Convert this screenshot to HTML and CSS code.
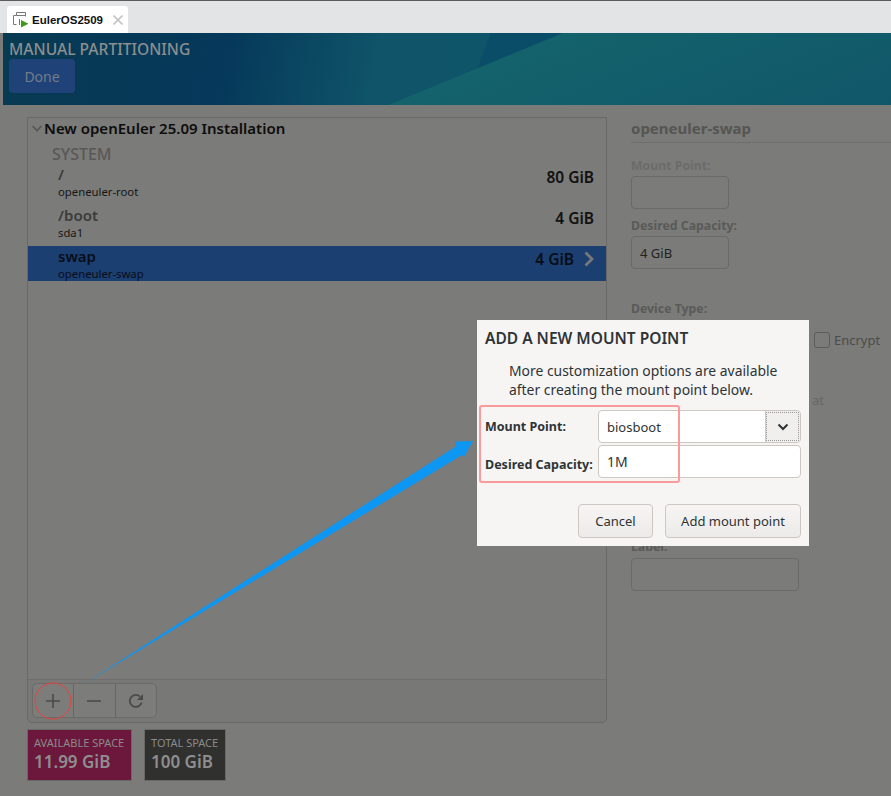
FILE: index.html
```html
<!DOCTYPE html>
<html lang="en">
<head>
  <meta charset="UTF-8">
  <title>Manual Partitioning</title>
  <link rel="stylesheet" href="styles.css">
</head>
<body>
  <div class="tabbar">
    <div class="tab">
      <svg class="vm-icon" width="16" height="16" viewBox="0 0 16 16">
        <path d="M3.5 12.5H.5V3.5h3M3.5 3.5V.5h9v4M3.5 3.5h9M6.5 7v6" fill="none" stroke="#777" stroke-width="1"/>
        <path d="M8 8l7.5 3.8L8 15.5z" fill="#3f9a1c"/>
      </svg>
      <span class="tab-name">EulerOS2509</span>
      <svg class="tab-close" width="10" height="10" viewBox="0 0 10 10"><path d="M.5.5l9 9M9.5.5l-9 9" stroke="#c4c4c4" stroke-width="1.6"/></svg>
    </div>
  </div>

  <div class="window">
    <header class="banner">
      <h1>MANUAL PARTITIONING</h1>
      <button class="done">Done</button>
    </header>

    <div class="content">
      <div class="left">
        <div class="panel">
          <div class="panel-head">
            <svg width="12" height="12" viewBox="0 0 12 12"><path d="M1.5 4l4.5 4.5L10.5 4" fill="none" stroke="#555" stroke-width="1.6"/></svg>
            <span>New openEuler 25.09 Installation</span>
          </div>
          <div class="section">SYSTEM</div>
          <div class="row row-first">
            <div><div class="mount">/</div><div class="dev">openeuler-root</div></div>
            <div class="size">80 GiB</div>
          </div>
          <div class="row">
            <div><div class="mount">/boot</div><div class="dev">sda1</div></div>
            <div class="size">4 GiB</div>
          </div>
          <div class="row selected">
            <div><div class="mount">swap</div><div class="dev">openeuler-swap</div></div>
            <div class="size">4 GiB
              <svg width="12" height="16" viewBox="0 0 12 16"><path d="M2.5 1.5L9 8l-6.5 6.5" fill="none" stroke="#777" stroke-width="2.8"/></svg>
            </div>
          </div>
          <div class="spacer"></div>
          <div class="toolbar">
            <div class="tool-group">
              <div class="tool"><svg width="16" height="16" viewBox="0 0 16 16"><path d="M8 1v14M1 8h14" stroke="#4a4a48" stroke-width="1.6"/></svg></div>
              <div class="tool"><svg width="16" height="16" viewBox="0 0 16 16"><path d="M1 8h14" stroke="#4a4a48" stroke-width="1.6"/></svg></div>
              <div class="tool"><svg width="16" height="16" viewBox="0 0 16 16"><path d="M13.6 9.5A6 6 0 1 1 12 3.6" fill="none" stroke="#4a4a48" stroke-width="1.8"/><path d="M15 1v6H9z" fill="#4a4a48"/></svg></div>
            </div>
          </div>
        </div>
        <div class="spaces">
          <div class="space space-free"><div class="space-label">AVAILABLE SPACE</div><div class="space-value">11.99 GiB</div></div>
          <div class="space space-total"><div class="space-label">TOTAL SPACE</div><div class="space-value">100 GiB</div></div>
        </div>
      </div>

      <div class="right">
        <div class="detail-title">openeuler-swap</div>
        <div class="field-label label-off">Mount Point:</div>
        <div class="field"></div>
        <div class="field-label label-cap">Desired Capacity:</div>
        <div class="field">4 GiB</div>
        <div class="field-label label-type">Device Type:</div>
        <div class="encrypt"><span class="check"></span>Encrypt</div>
        <div class="format-tail">at</div>
        <div class="field-label label-name">Label:</div>
        <div class="field field-wide"></div>
      </div>
    </div>
  </div>

  <div class="dialog">
    <h2>ADD A NEW MOUNT POINT</h2>
    <p>More customization options are available<br>after creating the mount point below.</p>
    <div class="form">
      <label>Mount Point:</label>
      <div class="combo"><span>biosboot</span><div class="combo-btn"><svg width="12" height="8" viewBox="0 0 12 8"><path d="M1.5 1.5L6 6l4.5-4.5" fill="none" stroke="#2e3436" stroke-width="2"/></svg></div></div>
      <label class="label-low">Desired Capacity:</label>
      <div class="entry">1M</div>
    </div>
    <div class="actions">
      <button class="btn btn-cancel">Cancel</button>
      <button class="btn btn-add">Add mount point</button>
    </div>
  </div>

  <svg class="notes" width="891" height="796" viewBox="0 0 891 796">
    <polygon points="84,684 456.5,446 455,441.5 473,441 464,457 462,455" fill="#0d96f2"/>
    <ellipse cx="53" cy="701" rx="18" ry="18" fill="none" stroke="#e8403c" stroke-width="1"/>
    <rect x="480" y="406" width="199" height="76" rx="2" fill="none" stroke="#fb9a9a" stroke-width="2"/>
  </svg>
</body>
</html>
```

FILE: styles.css
```css
* { box-sizing: border-box; }
body {
  margin: 0;
  height: 796px;
  overflow: hidden;
  font-family: "Noto Sans", "Open Sans", sans-serif;
  font-size: 13px;
  background: #7b7b79;
  color: #111;
  position: relative;
}

.tabbar {
  height: 33px;
  background: #e3e4e6;
  border-top: 1px solid #5c5c5c;
  padding: 5px 0 0 7px;
}
.tab {
  width: 121px;
  height: 27px;
  background: #fff;
  border-radius: 3px 3px 0 0;
  display: flex;
  align-items: center;
  padding-left: 6px;
}
.vm-icon { flex: none; margin-right: 3px; }
.tab-name { font-family: "Liberation Sans", sans-serif; font-size: 11.5px; font-weight: bold; color: #111; }
.tab-close { margin-left: 10px; }

.window { margin-left: 3px; }
.banner {
  height: 72px;
  padding: 6px 0 0 6px;
  background:
    linear-gradient(157.6deg, transparent 52.6%, #14626b 52.8%, #10576a 100%),
    linear-gradient(110.4deg, transparent 53.2%, #0a4d68 53.4%),
    linear-gradient(100deg, #083a52 0%, #05385a 25%, #0f5468 42%, #0e566e 100%);
}
.banner h1 {
  margin: 0;
  font-size: 15.6px;
  font-weight: 500;
  line-height: 20px;
  color: #8b8f90;
}
.done {
  display: block;
  margin: 0;
  width: 66px;
  height: 34px;
  border: 0;
  border-radius: 4px;
  background: #1f4378;
  color: #737c88;
  font-family: inherit;
  font-size: 14px;
}

.content { display: flex; padding: 12px 0 0 24px; }
.left { width: 580px; flex: none; }
.panel {
  height: 606px;
  border: 1px solid #686866;
  border-radius: 0 0 5px 5px;
  display: flex;
  flex-direction: column;
}
.panel-head {
  height: 20px;
  display: flex;
  align-items: center;
  gap: 1px;
  padding: 0 0 0 3px;
  font-size: 15px;
  font-weight: 600;
  color: #0d0d0d;
}
.section {
  margin: 7px 0 0 24px;
  font-size: 16px;
  font-weight: 500;
  line-height: 18px;
  color: #585856;
}
.row {
  height: 41px;
  display: flex;
  justify-content: space-between;
  align-items: center;
  padding: 0 12px 0 30px;
}
.row-first { height: 40px; margin-top: -1px; }
.mount { font-size: 15px; font-weight: 600; line-height: 19px; color: #3c3c3b; }
.dev { font-size: 11.3px; line-height: 15px; color: #161616; }
.size {
  margin-bottom: 10px;
  font-size: 15.5px;
  font-weight: 600;
  color: #111;
  display: flex;
  align-items: center;
  gap: 9px;
}
.selected {
  height: 35px;
  margin-top: 3px;
  background: #1c3f72;
  padding-right: 11px;
}
.selected .mount,
.selected .dev,
.selected .size { color: #080e18; }
.spacer { flex: 1; }
.toolbar {
  height: 43px;
  border-top: 1px solid #6e6e6c;
  padding: 3px 0 0 4px;
  background: #787876;
  border-radius: 0 0 5px 5px;
}
.tool-group {
  width: 125px;
  height: 35px;
  display: flex;
  border: 1px solid #6a6a68;
  border-radius: 5px;
  background: #7c7c7a;
}
.tool {
  flex: 1;
  display: flex;
  align-items: center;
  justify-content: center;
  border-left: 1px solid #666664;
}
.tool:first-child { border-left: 0; }

.spaces { display: flex; gap: 12px; margin-top: 6px; }
.space {
  height: 52px;
  padding: 6px 6px 0;
  border: 1px solid #686866;
}
.space-free { width: 105px; background: #6b183c; }
.space-total { width: 82px; background: #30302e; }
.space-label { font-size: 11px; line-height: 14px; color: #8a8a8a; white-space: nowrap; }
.space-value { font-size: 17px; font-weight: 600; line-height: 24px; color: #8e8e8e; white-space: nowrap; }

.right { margin-left: 24px; flex: 1; }
.detail-title {
  height: 26px;
  padding-top: 2px;
  border-bottom: 1px solid #6e6e6c;
  font-size: 15px;
  font-weight: 700;
  line-height: 18px;
  color: #555553;
}
.field-label { font-size: 12.3px; font-weight: 700; line-height: 16px; color: #5a5a58; }
.label-off { margin-top: 15px; margin-bottom: 2px; color: #6c6c6a; }
.label-cap { margin-top: 9px; margin-bottom: 2px; }
.label-type { margin-top: 32px; }
.label-name { margin-top: 148px; margin-bottom: 3px; }
.field {
  width: 98px;
  height: 33px;
  border: 1px solid #6a6a68;
  border-radius: 4px;
  padding-left: 8px;
  line-height: 32px;
  color: #222;
}
.field-wide { width: 168px; }
.encrypt {
  display: flex;
  align-items: center;
  gap: 4px;
  margin: 15px 0 0 183px;
  line-height: 16px;
  color: #4c4c4a;
}
.check {
  width: 16px;
  height: 16px;
  border: 1px solid #5c5c5a;
  border-radius: 3px;
}
.format-tail { margin: 43px 0 0 181px; height: 0; color: #686866; }

.dialog {
  position: absolute;
  left: 477px;
  top: 320px;
  width: 332px;
  height: 226px;
  padding: 8px;
  background: #f6f5f4;
  color: #2e3436;
}
.dialog h2 {
  margin: 0;
  font-size: 15.5px;
  font-weight: 600;
  line-height: 20px;
}
.dialog p {
  margin: 13px 0 0 24px;
  font-size: 13.9px;
  line-height: 19px;
}
.form {
  display: grid;
  grid-template-columns: 113px 203px;
  grid-template-rows: 35px 33px;
  align-items: start;
  margin-top: 11px;
}
.form label { font-size: 12.5px; font-weight: 700; line-height: 33px; }
.form .label-low { padding-top: 3px; }
.combo, .entry {
  height: 33px;
  background: #fff;
  border: 1px solid #cdc7c2;
  border-radius: 4px;
  font-size: 13px;
  padding-left: 8px;
}
.combo {
  display: flex;
  align-items: center;
  justify-content: space-between;
  padding-right: 0;
  overflow: hidden;
}
.combo-btn {
  width: 35px;
  height: 31px;
  display: flex;
  align-items: center;
  justify-content: center;
  background: #f0efed;
  border-left: 1px solid #cdc7c2;
  outline: 1px dotted #9a9a9a;
  outline-offset: -2px;
}
.entry { line-height: 31px; font-size: 14px; }
.actions {
  display: flex;
  justify-content: flex-end;
  gap: 12px;
  margin-top: 26px;
}
.btn {
  height: 34px;
  border: 1px solid #cdc7c2;
  border-radius: 4px;
  background: linear-gradient(#f6f5f4, #edebe9);
  color: #2e3436;
  font-family: inherit;
  font-size: 13px;
}
.btn-cancel { width: 75px; }
.btn-add { width: 136px; }

.notes { position: absolute; left: 0; top: 0; pointer-events: none; }
```
